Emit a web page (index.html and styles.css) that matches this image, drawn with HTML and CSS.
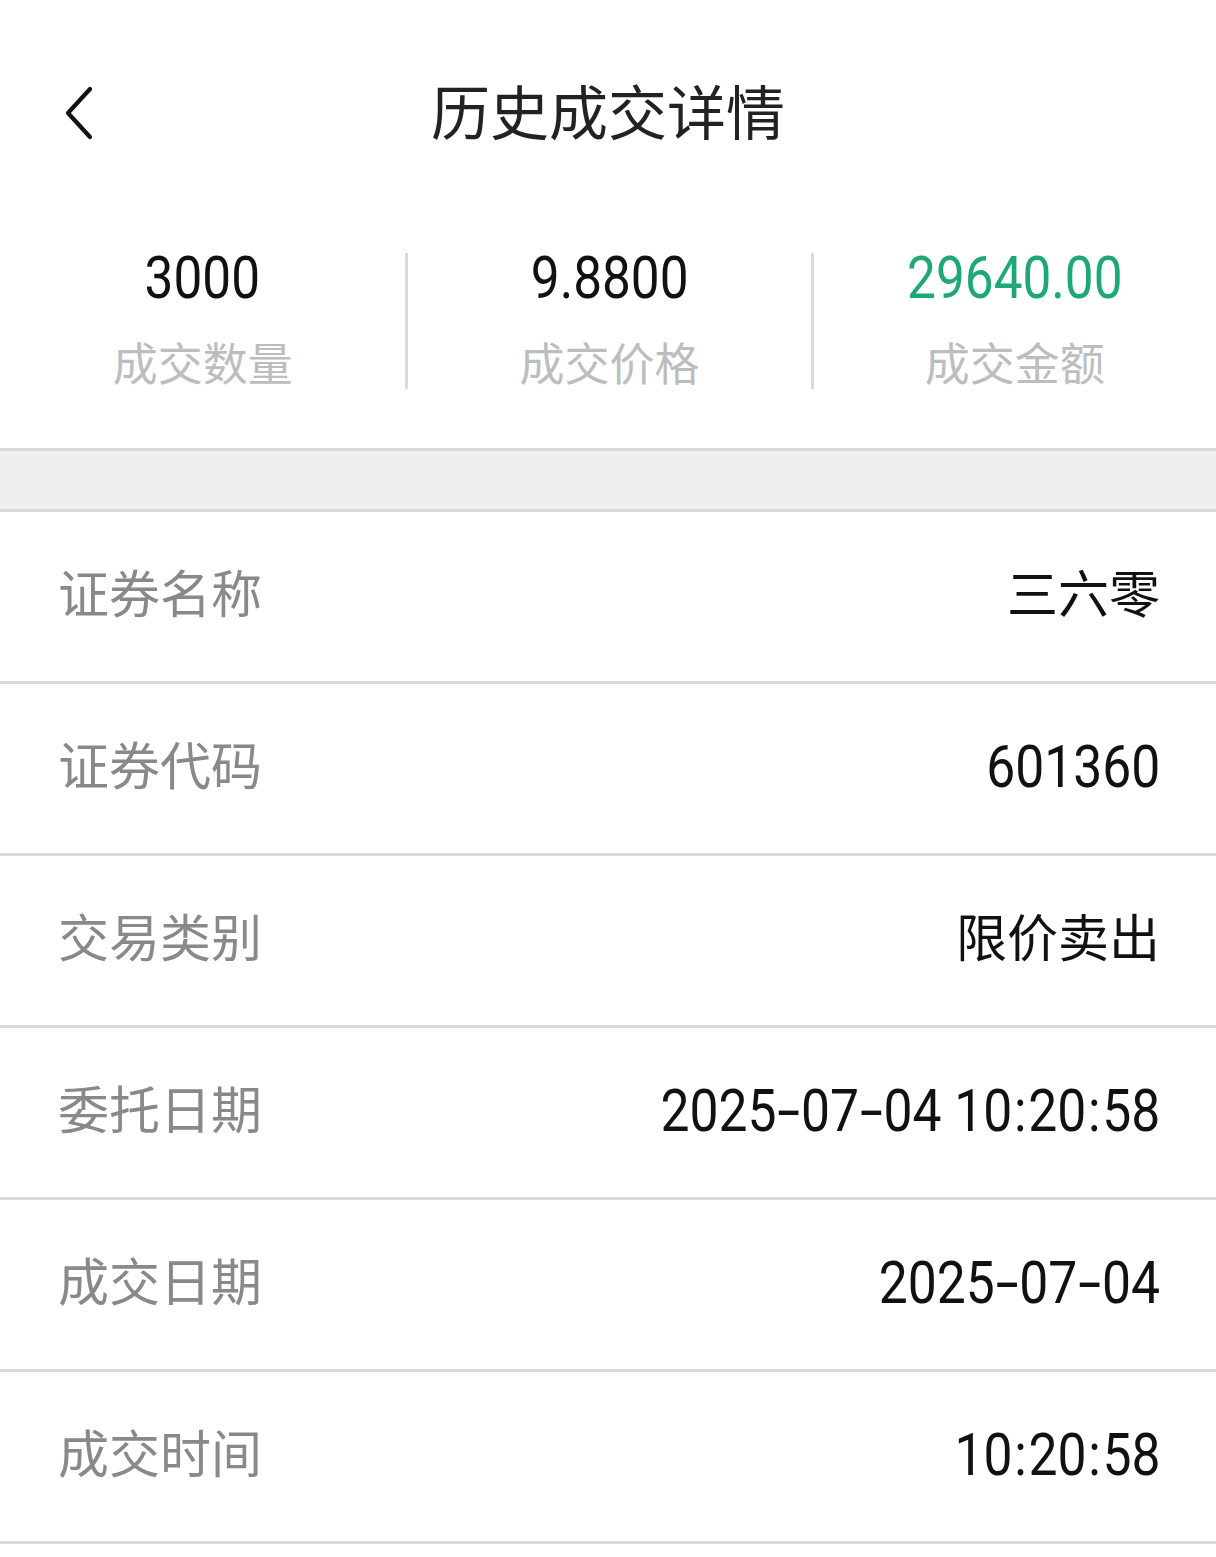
FILE: index.html
```html
<!DOCTYPE html>
<html lang="zh-CN">
<head>
<meta charset="utf-8">
<title>历史成交详情</title>
<link rel="stylesheet" href="styles.css">
</head>
<body>
<div class="page">
  <header class="topbar">
    <span class="back">
      <svg width="40" height="60" viewBox="0 0 40 60" aria-hidden="true">
        <polyline points="28,8 6,32 28,56" fill="none" stroke="#111" stroke-width="4.2" stroke-linecap="round" stroke-linejoin="round"/>
      </svg>
    </span>
    <h1 class="title">历史成交详情</h1>
  </header>

  <section class="stats">
    <div class="stat">
      <div class="stat-value"><span class="num">3000</span></div>
      <div class="stat-label">成交数量</div>
    </div>
    <div class="stat">
      <div class="stat-value"><span class="num">9.8800</span></div>
      <div class="stat-label">成交价格</div>
    </div>
    <div class="stat">
      <div class="stat-value green"><span class="num">29640.00</span></div>
      <div class="stat-label">成交金额</div>
    </div>
  </section>

  <div class="gap"></div>

  <section class="list">
    <div class="row"><span class="label">证券名称</span><span class="value">三六零</span></div>
    <div class="row"><span class="label">证券代码</span><span class="value-num"><span class="num">601360</span></span></div>
    <div class="row"><span class="label">交易类别</span><span class="value">限价卖出</span></div>
    <div class="row"><span class="label">委托日期</span><span class="value-num"><span class="num">2025<span class="dash">-</span>07<span class="dash">-</span>04 10<span class="colon">:</span>20<span class="colon">:</span>58</span></span></div>
    <div class="row"><span class="label">成交日期</span><span class="value-num"><span class="num">2025<span class="dash">-</span>07<span class="dash">-</span>04</span></span></div>
    <div class="row"><span class="label">成交时间</span><span class="value-num"><span class="num">10<span class="colon">:</span>20<span class="colon">:</span>58</span></span></div>
  </section>
</div>
</body>
</html>
```

FILE: styles.css
```css
* { box-sizing: border-box; }

html, body {
  margin: 0;
  padding: 0;
  background: #ffffff;
}

body {
  font-family: "Noto Sans CJK SC", "Noto Sans", sans-serif;
  color: #111;
}

.page {
  width: 1216px;
}

.topbar {
  position: relative;
  height: 226px;
  display: flex;
  align-items: center;
  justify-content: center;
}

.back {
  position: absolute;
  left: 62px;
  top: 81px;
  width: 40px;
  height: 60px;
  display: block;
}

.back svg { display: block; }

.title {
  margin: 0 0 6px;
  font-size: 59px;
  font-weight: 400;
  color: #222;
  line-height: 60px;
  letter-spacing: 0;
}

.stats {
  display: grid;
  grid-template-columns: 1fr 1fr 1fr;
  padding: 27px 0 59px;
  border-bottom: 3px solid #d9d9d9;
}

.stat {
  display: flex;
  flex-direction: column;
  align-items: center;
  height: 136px;
}

.stat + .stat {
  border-left: 3px solid #dadada;
}

.stat-value {
  height: 50px;
  line-height: 50px;
  font-family: "Roboto", "Liberation Sans", sans-serif;
  font-size: 59px;
  color: #111;
  white-space: nowrap;
}

.stat-value .num {
  display: inline-block;
  transform: scaleX(0.87);
  transform-origin: center center;
}

.stat-value.green { color: #1fa972; }

.stat-label {
  margin-top: 34px;
  height: 50px;
  line-height: 50px;
  font-size: 45px;
  color: #bdbdbd;
}

.gap {
  height: 61px;
  background: #efefef;
  border-bottom: 3px solid #d9d9d9;
}

.row {
  height: 172px;
  display: flex;
  align-items: center;
  justify-content: space-between;
  padding: 0 56px 0 58px;
  border-bottom: 3px solid #dadada;
}

.label {
  font-size: 51px;
  color: #898989;
  line-height: 60px;
  margin-bottom: 12px;
}

.value {
  font-size: 51px;
  color: #111;
  line-height: 60px;
  white-space: nowrap;
  margin-bottom: 12px;
}

.value-num {
  color: #111;
  line-height: 60px;
  white-space: nowrap;
  margin-top: 10px;
}

.value-num .num {
  display: inline-block;
  font-family: "Roboto", "Liberation Sans", sans-serif;
  font-size: 60px;
  transform: scaleX(0.86);
  transform-origin: right center;
}

.dash {
  display: inline-block;
  margin: 0 6px;
  transform: scaleX(1.6);
}

.colon {
  display: inline-block;
  margin: 0 2px;
}
```
